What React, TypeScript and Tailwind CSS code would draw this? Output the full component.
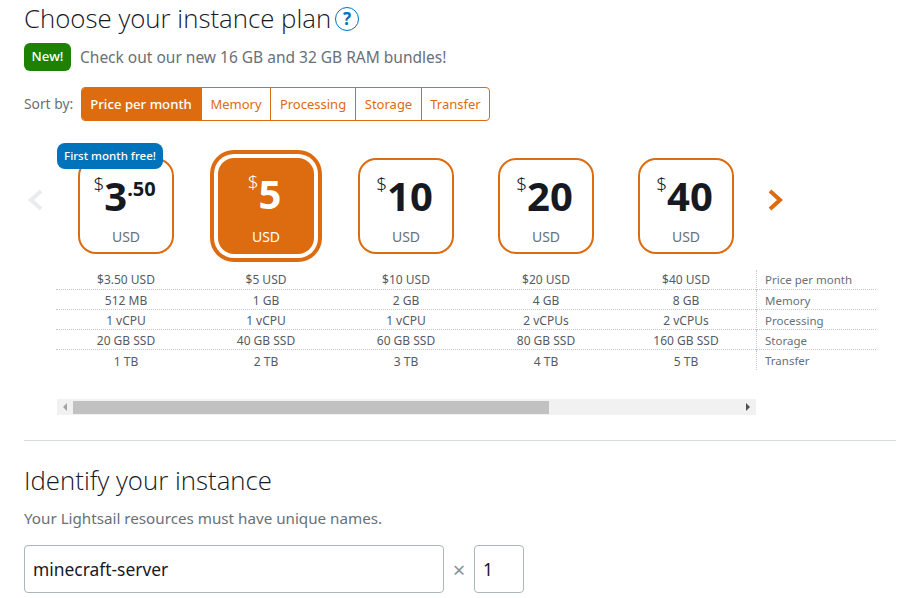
import React from 'react';

const plans = [
  { dollars: '3', cents: '.50', specs: ['$3.50 USD', '512 MB', '1 vCPU', '20 GB SSD', '1 TB'], badge: 'First month free!' },
  { dollars: '5', cents: '', specs: ['$5 USD', '1 GB', '1 vCPU', '40 GB SSD', '2 TB'], selected: true },
  { dollars: '10', cents: '', specs: ['$10 USD', '2 GB', '1 vCPU', '60 GB SSD', '3 TB'] },
  { dollars: '20', cents: '', specs: ['$20 USD', '4 GB', '2 vCPUs', '80 GB SSD', '4 TB'] },
  { dollars: '40', cents: '', specs: ['$40 USD', '8 GB', '2 vCPUs', '160 GB SSD', '5 TB'] },
];

const rowLabels = ['Price per month', 'Memory', 'Processing', 'Storage', 'Transfer'];
const sortOptions = [
  { label: 'Price per month', width: 'w-[119px]' },
  { label: 'Memory', width: 'w-[69px]' },
  { label: 'Processing', width: 'w-[85px]' },
  { label: 'Storage', width: 'w-[66px]' },
  { label: 'Transfer', width: 'w-[68px]' },
];

function PlanCard({ plan }: { plan: (typeof plans)[number] }) {
  return (
    <div className="w-[140px] flex justify-center">
      <div
        className={
          plan.selected
            ? 'relative w-24 h-24 rounded-[16px] bg-[#dd6b10] text-white shadow-[0_0_0_4px_#ffffff,0_0_0_8px_#dd6b10]'
            : 'relative w-24 h-24 rounded-[18px] border-2 border-[#dd6b10] bg-white text-[#16191f]'
        }
      >
        {plan.badge && (
          <div className="absolute top-[-17px] left-[-23px] w-[106px] h-[26px] rounded-[8px] bg-[#0073bb] text-white text-[11.5px] font-medium leading-[26px] text-center whitespace-nowrap">
            {plan.badge}
          </div>
        )}
        <div className="absolute inset-x-0 top-[13px] pr-[3px] flex justify-center items-start">
          <span className="text-[19px] leading-[22px] font-light">$</span>
          <span className="text-[40px] leading-[46px] font-bold">{plan.dollars}</span>
          {plan.cents && <span className="text-[20px] leading-[32px] font-bold">{plan.cents}</span>}
        </div>
        <div
          className={
            plan.selected
              ? 'absolute inset-x-0 bottom-[7px] text-center text-[14px] leading-5'
              : 'absolute inset-x-0 bottom-[5px] text-center text-[14px] leading-5 text-[#687078]'
          }
        >
          USD
        </div>
      </div>
    </div>
  );
}

function Chevron({ direction, className }: { direction: 'left' | 'right'; className: string }) {
  return (
    <svg width="15" height="22" viewBox="0 0 15 22" fill="none" className={className}>
      <polyline
        points={direction === 'right' ? '2,2 12,11 2,20' : '13,2 3,11 13,20'}
        stroke="currentColor"
        strokeWidth="4"
      />
    </svg>
  );
}

export default function App() {
  return (
    <div className="w-[914px] h-[598px] overflow-hidden bg-white px-6 font-['Noto_Sans',sans-serif] text-[#16191f]">
      <div className="flex items-center h-[38px]">
        <h1 className="font-['Open_Sans',sans-serif] text-[25.8px] leading-[36px] font-light mb-[2px]">Choose your instance plan</h1>
        <span className="ml-[4px] w-6 h-6 rounded-full border-[1.5px] border-[#0073bb] text-[#0073bb] text-[17px] font-bold flex items-center justify-center">
          ?
        </span>
      </div>

      <div className="flex items-center mt-[5px] h-7">
        <span className="w-[47px] h-7 rounded-[6px] bg-[#1d8102] text-white text-[13.2px] font-medium flex items-center justify-center">
          New!
        </span>
        <span className="ml-[9px] pt-[2px] text-[15.5px] text-[#687078]">Check out our new 16 GB and 32 GB RAM bundles!</span>
      </div>

      <div className="flex items-center mt-4 h-[34px]">
        <span className="w-[57px] text-[13.8px] text-[#687078]">Sort by:</span>
        <div className="flex h-[34px] border border-[#dd6b10] rounded-[4px] overflow-hidden">
          {sortOptions.map((option, i) => (
            <div
              key={option.label}
              className={
                i === 0
                  ? `${option.width} pt-[1px] pr-[1px] bg-[#dd6b10] text-white text-[13.2px] font-medium flex items-center justify-center`
                  : `${option.width} pt-[1px] border-l border-[#dd6b10] text-[#dd6b10] text-[13px] flex items-center justify-center`
              }
            >
              {option.label}
            </div>
          ))}
        </div>
      </div>

      <div className="flex items-start mt-[37px] h-24">
        <div className="w-8 pl-1 pt-[31px]">
          <Chevron direction="left" className="text-[#e9ebed]" />
        </div>
        {plans.map(plan => (
          <PlanCard key={plan.dollars} plan={plan} />
        ))}
        <div className="ml-3 pt-[31px]">
          <Chevron direction="right" className="text-[#dd6b10]" />
        </div>
      </div>

      <div className="ml-8 mt-4 w-[820px]">
        {rowLabels.map((label, row) => (
          <div
            key={label}
            className={
              row < 4
                ? 'flex h-5 items-center border-b border-dotted border-[#c4c9cd] text-[12px]'
                : 'flex h-5 items-center text-[12px]'
            }
          >
            {plans.map(plan => (
              <div key={plan.dollars} className={row === 0 ? 'w-[140px] text-center text-[#545b64]' : 'w-[140px] pt-[3px] text-center text-[#545b64]'}>
                {plan.specs[row]}
              </div>
            ))}
            <div className={row === 0 ? 'h-5 pl-2 leading-5 border-l border-dotted border-[#c4c9cd] text-[11.5px] text-[#687078]' : 'h-5 pl-2 pt-[1px] leading-5 border-l border-dotted border-[#c4c9cd] text-[11.5px] text-[#687078]'}>{label}</div>
          </div>
        ))}
      </div>

      <div className="ml-[33px] mt-[29px] w-[699px] h-4 bg-[#f1f1f1] flex items-center">
        <span className="w-4 flex justify-center">
          <span className="border-y-[4px] border-y-transparent border-r-[4px] border-r-[#a3a3a3]"></span>
        </span>
        <div className="w-[476px] h-[13px] bg-[#c1c1c1]"></div>
        <span className="ml-auto w-4 flex justify-center">
          <span className="border-y-[4px] border-y-transparent border-l-[4px] border-l-[#505050]"></span>
        </span>
      </div>

      <div className="mt-[25px] w-[872px] border-t border-[#d5dbdb]"></div>

      <h2 className="mt-[19px] font-['Open_Sans',sans-serif] text-[25.8px] leading-10 font-light">Identify your instance</h2>
      <p className="mt-[8px] text-[15.2px] leading-5 text-[#687078]">Your Lightsail resources must have unique names.</p>

      <div className="flex items-center mt-[17px]">
        <div className="w-[420px] h-12 rounded-[4px] border border-[#aab7b8] px-2 flex items-center text-[17.4px]">
          minecraft-server
        </div>
        <span className="w-[30px] text-center text-[22px] text-[#879596]">×</span>
        <div className="w-[50px] h-12 rounded-[4px] border border-[#aab7b8] px-2 flex items-center text-[17.4px]">1</div>
      </div>
    </div>
  );
}
